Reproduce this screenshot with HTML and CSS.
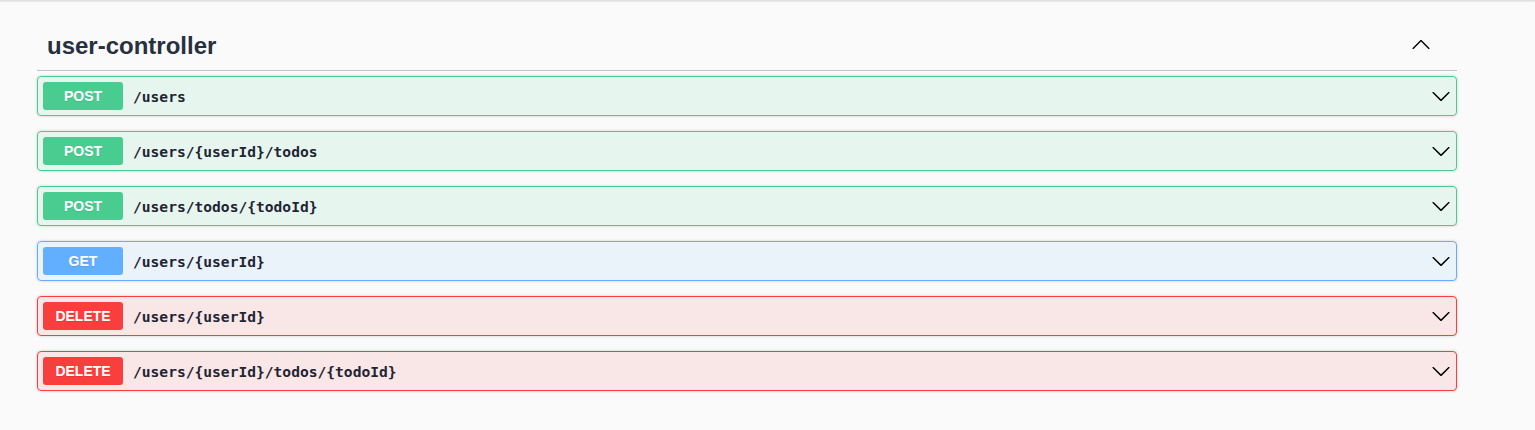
FILE: index.html
```html
<!DOCTYPE html>
<html>
<head>
<meta charset="utf-8">
<link rel="stylesheet" href="styles.css">
</head>
<body>
<div class="topline"></div>
<div class="wrapper">
  <section class="tag-section">
    <div class="tag-header">
      <h3 class="tag-title">user-controller</h3>
      <button class="tag-toggle" aria-label="collapse">
        <svg width="20" height="20" viewBox="0 0 20 20"><path d="M17.418 14.908c.272.268.709.268.979 0s.271-.701 0-.969l-7.908-7.83c-.27-.268-.707-.268-.979 0l-7.908 7.83c-.27.268-.27.701 0 .969.271.268.709.268.979 0L10 7.576l7.418 7.332z"/></svg>
      </button>
    </div>
    <div class="opblock post">
      <span class="method">POST</span>
      <span class="path">/users</span>
      <svg class="chev" width="20" height="20" viewBox="0 0 20 20"><path d="M17.418 6.109c.272-.268.709-.268.979 0s.271.701 0 .969l-7.908 7.83c-.27.268-.707.268-.979 0l-7.908-7.830c-.27-.268-.27-.701 0-.969.271-.268.709-.268.979 0L10 13.25l7.418-7.141z"/></svg>
    </div>
    <div class="opblock post">
      <span class="method">POST</span>
      <span class="path">/users/{userId}/todos</span>
      <svg class="chev" width="20" height="20" viewBox="0 0 20 20"><path d="M17.418 6.109c.272-.268.709-.268.979 0s.271.701 0 .969l-7.908 7.83c-.27.268-.707.268-.979 0l-7.908-7.83c-.27-.268-.27-.701 0-.969.271-.268.709-.268.979 0L10 13.25l7.418-7.141z"/></svg>
    </div>
    <div class="opblock post">
      <span class="method">POST</span>
      <span class="path">/users/todos/{todoId}</span>
      <svg class="chev" width="20" height="20" viewBox="0 0 20 20"><path d="M17.418 6.109c.272-.268.709-.268.979 0s.271.701 0 .969l-7.908 7.83c-.27.268-.707.268-.979 0l-7.908-7.83c-.27-.268-.27-.701 0-.969.271-.268.709-.268.979 0L10 13.25l7.418-7.141z"/></svg>
    </div>
    <div class="opblock get">
      <span class="method">GET</span>
      <span class="path">/users/{userId}</span>
      <svg class="chev" width="20" height="20" viewBox="0 0 20 20"><path d="M17.418 6.109c.272-.268.709-.268.979 0s.271.701 0 .969l-7.908 7.83c-.27.268-.707.268-.979 0l-7.908-7.83c-.27-.268-.27-.701 0-.969.271-.268.709-.268.979 0L10 13.25l7.418-7.141z"/></svg>
    </div>
    <div class="opblock delete">
      <span class="method">DELETE</span>
      <span class="path">/users/{userId}</span>
      <svg class="chev" width="20" height="20" viewBox="0 0 20 20"><path d="M17.418 6.109c.272-.268.709-.268.979 0s.271.701 0 .969l-7.908 7.83c-.27.268-.707.268-.979 0l-7.908-7.83c-.27-.268-.27-.701 0-.969.271-.268.709-.268.979 0L10 13.25l7.418-7.141z"/></svg>
    </div>
    <div class="opblock delete">
      <span class="method">DELETE</span>
      <span class="path">/users/{userId}/todos/{todoId}</span>
      <svg class="chev" width="20" height="20" viewBox="0 0 20 20"><path d="M17.418 6.109c.272-.268.709-.268.979 0s.271.701 0 .969l-7.908 7.83c-.27.268-.707.268-.979 0l-7.908-7.83c-.27-.268-.27-.701 0-.969.271-.268.709-.268.979 0L10 13.25l7.418-7.141z"/></svg>
    </div>
  </section>
</div>
</body>
</html>
```
FILE: styles.css
```css
html, body {
  margin: 0;
  padding: 0;
  background: #fafafa;
  font-family: "Liberation Sans", Arial, sans-serif;
  color: #3b4151;
}

.topline {
  height: 2px;
  background: linear-gradient(#dedede, #ececec);
}

.wrapper {
  padding: 20px 0 0 37px;
}

.tag-section {
  width: 1420px;
}

.tag-header {
  display: flex;
  align-items: center;
  padding: 10px 26px 10px 10px;
  border-bottom: 1px solid rgba(59, 65, 81, 0.3);
  margin-bottom: 5px;
}

.tag-title {
  flex: 1;
  margin: 0;
  font-size: 24px;
  line-height: 28px;
  font-weight: 700;
  color: #283040;
}

.tag-toggle {
  border: none;
  background: none;
  padding: 0;
  margin: 0;
  display: flex;
  margin-top: -4px;
}

.tag-toggle svg,
.chev {
  fill: #000;
  display: block;
}

.opblock {
  display: flex;
  align-items: center;
  padding: 5px;
  border: 1px solid;
  border-radius: 4px;
  box-shadow: 0 0 3px rgba(0, 0, 0, 0.19);
  margin-bottom: 15px;
}

.method {
  min-width: 80px;
  padding: 6px 0;
  border-radius: 3px;
  font-size: 14px;
  line-height: 16px;
  font-weight: 700;
  color: #fff;
  text-align: center;
  text-shadow: 0 1px 0 rgba(0, 0, 0, 0.1);
}

.path {
  flex: 1;
  padding: 0 10px;
  font-family: "DejaVu Sans Mono", "Liberation Mono", monospace;
  font-weight: 700;
  font-size: 14.6px;
  color: #1f2533;
}

.post {
  border-color: #49cc90;
  background: rgba(73, 204, 144, 0.1);
}
.post .method { background: #49cc90; }

.get {
  border-color: #61affe;
  background: rgba(97, 175, 254, 0.1);
}
.get .method { background: #61affe; }

.delete {
  border-color: #f93e3e;
  background: rgba(249, 62, 62, 0.1);
}
.delete .method { background: #f93e3e; }
```
